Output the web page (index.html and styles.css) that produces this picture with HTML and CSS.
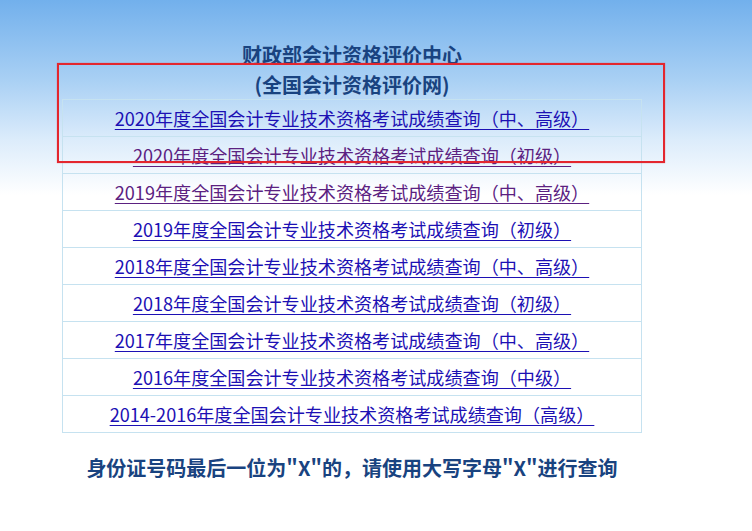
FILE: index.html
```html
<!DOCTYPE html>
<html lang="zh-CN">
<head>
<meta charset="utf-8">
<title>财政部会计资格评价中心</title>
<link rel="stylesheet" href="styles.css">
</head>
<body>
<div class="page">
  <div class="title">
    <div class="title-line">财政部会计资格评价中心</div>
    <div class="title-line">(全国会计资格评价网)</div>
  </div>
  <table class="list">
    <tr><td class="first"><a class="link" href="#">2020年度全国会计专业技术资格考试成绩查询（中、高级）</a></td></tr>
    <tr><td><a class="link visited" href="#">2020年度全国会计专业技术资格考试成绩查询（初级）</a></td></tr>
    <tr><td><a class="link visited" href="#">2019年度全国会计专业技术资格考试成绩查询（中、高级）</a></td></tr>
    <tr><td><a class="link" href="#">2019年度全国会计专业技术资格考试成绩查询（初级）</a></td></tr>
    <tr><td><a class="link" href="#">2018年度全国会计专业技术资格考试成绩查询（中、高级）</a></td></tr>
    <tr><td><a class="link" href="#">2018年度全国会计专业技术资格考试成绩查询（初级）</a></td></tr>
    <tr><td><a class="link" href="#">2017年度全国会计专业技术资格考试成绩查询（中、高级）</a></td></tr>
    <tr><td><a class="link" href="#">2016年度全国会计专业技术资格考试成绩查询（中级）</a></td></tr>
    <tr><td><a class="link" href="#">2014-2016年度全国会计专业技术资格考试成绩查询（高级）</a></td></tr>
  </table>
  <div class="note">身份证号码最后一位为"X"的，请使用大写字母"X"进行查询</div>
  <div class="highlight"></div>
</div>
</body>
</html>
```
FILE: styles.css
```css
html, body {
  margin: 0;
  padding: 0;
}
body {
  width: 752px;
  height: 531px;
  overflow: hidden;
  background: linear-gradient(to bottom, #72b0ec 0px, #a9d0f4 80px, #dcecfb 140px, #ffffff 195px, #ffffff 531px);
  font-family: "Noto Sans CJK SC", "Noto Sans", sans-serif;
}
.page {
  position: relative;
  width: 580px;
  margin-left: 62px;
  padding-top: 40px;
}
.title {
  text-align: center;
  font-size: 20px;
  font-weight: bold;
  color: #194380;
}
.title-line {
  line-height: 30px;
  height: 30px;
}
.list {
  border-collapse: collapse;
  width: 580px;
  margin-top: -1px;
}
.list td {
  height: 36px;
  padding: 0;
  border: 1px solid #c6e2f0;
  text-align: center;
  vertical-align: middle;
  line-height: 20px;
}
.link {
  font-size: 18.1px;
  color: #1c10b4;
  text-decoration: underline;
  text-underline-offset: 3px;
  text-decoration-thickness: 1px;
}
.link.visited {
  color: #5b2181;
}
.note {
  margin-top: 20px;
  text-align: center;
  font-size: 20px;
  font-weight: bold;
  color: #194380;
  line-height: 30px;
}
.highlight {
  position: absolute;
  left: -5px;
  top: 63px;
  width: 604px;
  height: 96px;
  border: 2px solid #e3262e;
  box-shadow: 0 0 1px rgba(227, 38, 46, 0.6);
}
```
